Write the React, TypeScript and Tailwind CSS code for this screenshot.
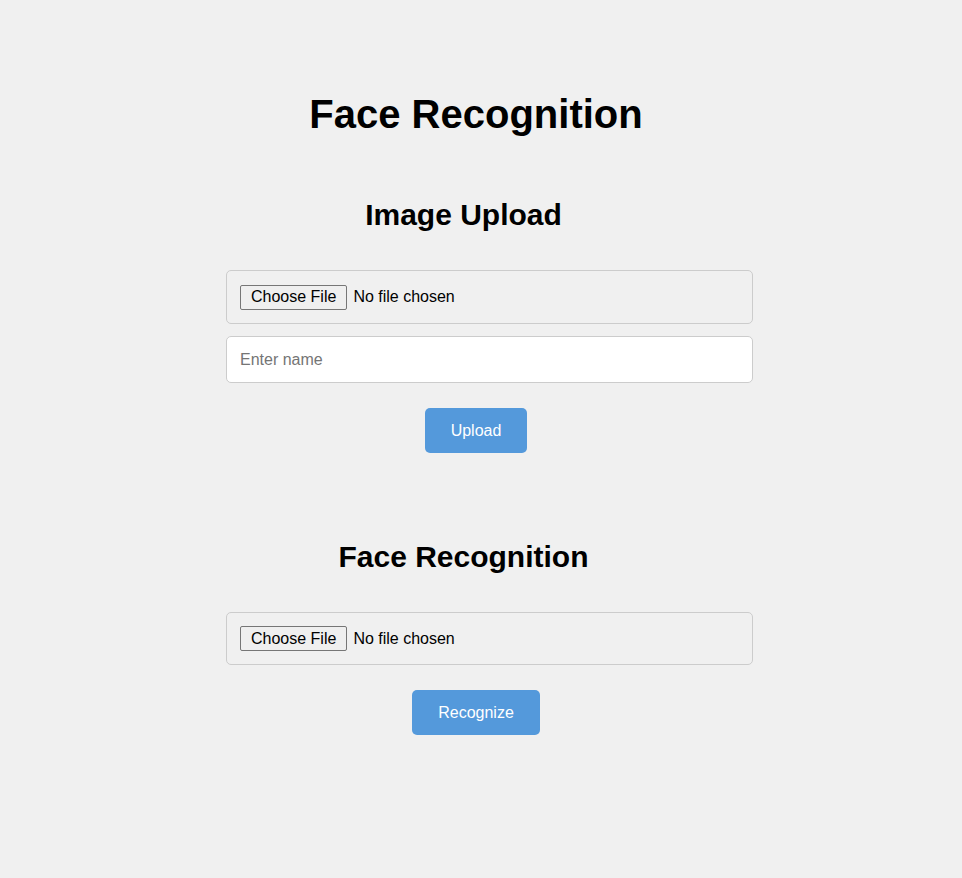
import React from "react";

function FileBox({ h }: { h: string }) {
  return (
    <div className={`${h} w-[527px] flex items-center rounded-[5px] border border-[#cccccc] pl-[13px]`}>
      <div className="h-[25px] flex items-center rounded-[2px] border border-[#767676] bg-[#efefef] px-[10px] text-[16px] leading-[18px] text-black">
        Choose File
      </div>
      <span className="ml-[6px] text-[16px] leading-[18px] text-black">No file chosen</span>
    </div>
  );
}

export default function App() {
  return (
    <div
      className="min-h-screen w-full bg-[#f0f0f0] text-black"
      style={{ fontFamily: '"Liberation Sans", Arial, sans-serif' }}
    >
      <div className="w-[952px] pt-[91px] pb-[100px] flex flex-col items-center">
        <h1 className="text-[40px] leading-[46px] font-bold">Face Recognition</h1>

        <div className="mt-[61px] self-start ml-[226px] w-[527px] flex flex-col">
          <h2 className="pr-[52px] text-center text-[30px] leading-[34px] font-bold">Image Upload</h2>
          <div className="mt-[38px]">
            <FileBox h="h-[54px]" />
          </div>
          <input
            type="text"
            placeholder="Enter name"
            className="mt-[12px] h-[47px] w-[527px] rounded-[5px] border border-[#cccccc] bg-white px-[13px] text-[16px] text-black placeholder:text-[#757575] outline-none"
          />
          <button className="mt-[25px] self-center mr-[27px] h-[45px] w-[102px] rounded-[5px] bg-[#5499db] text-[16px] text-white">
            Upload
          </button>

          <h2 className="mt-[87px] pr-[52px] text-center text-[30px] leading-[34px] font-bold">Face Recognition</h2>
          <div className="mt-[38px]">
            <FileBox h="h-[53px]" />
          </div>
          <button className="mt-[25px] self-center mr-[27px] h-[45px] w-[128px] rounded-[5px] bg-[#5499db] text-[16px] text-white">
            Recognize
          </button>
        </div>
      </div>
    </div>
  );
}
